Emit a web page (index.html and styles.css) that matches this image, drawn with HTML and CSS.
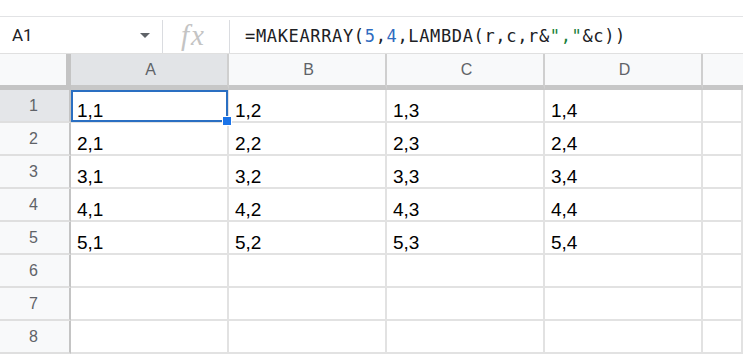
FILE: index.html
```html
<!DOCTYPE html>
<html>
<head>
<meta charset="utf-8">
<link rel="stylesheet" href="styles.css">
</head>
<body>
<div class="top"></div>
<div class="fbar">
  <div class="namebox"><span class="ref">A1</span><span class="caret"></span></div>
  <div class="sep"></div>
  <div class="fx">fx</div>
  <div class="sep"></div>
  <div class="formula">=MAKEARRAY(<span class="num">5</span>,<span class="num">4</span>,LAMBDA(r,c,r&amp;<span class="str">","</span>&amp;c))</div>
</div>
<div class="grid">
  <div class="corner"></div>
  <div class="ch sel">A</div>
  <div class="ch">B</div>
  <div class="ch">C</div>
  <div class="ch">D</div>
  <div class="ch last"></div>

  <div class="rh sel">1</div>
  <div class="cell active">1,1<span class="handle"></span></div>
  <div class="cell">1,2</div><div class="cell">1,3</div><div class="cell">1,4</div><div class="cell"></div>

  <div class="rh">2</div>
  <div class="cell">2,1</div><div class="cell">2,2</div><div class="cell">2,3</div><div class="cell">2,4</div><div class="cell"></div>

  <div class="rh">3</div>
  <div class="cell">3,1</div><div class="cell">3,2</div><div class="cell">3,3</div><div class="cell">3,4</div><div class="cell"></div>

  <div class="rh">4</div>
  <div class="cell">4,1</div><div class="cell">4,2</div><div class="cell">4,3</div><div class="cell">4,4</div><div class="cell"></div>

  <div class="rh">5</div>
  <div class="cell">5,1</div><div class="cell">5,2</div><div class="cell">5,3</div><div class="cell">5,4</div><div class="cell"></div>

  <div class="rh">6</div>
  <div class="cell"></div><div class="cell"></div><div class="cell"></div><div class="cell"></div><div class="cell"></div>

  <div class="rh">7</div>
  <div class="cell"></div><div class="cell"></div><div class="cell"></div><div class="cell"></div><div class="cell"></div>

  <div class="rh">8</div>
  <div class="cell"></div><div class="cell"></div><div class="cell"></div><div class="cell"></div><div class="cell"></div>
</div>
</body>
</html>
```
FILE: styles.css
```css
* { box-sizing: border-box; }
html, body {
  margin: 0;
  padding: 0;
  background: #ffffff;
  overflow: hidden;
  width: 743px;
  height: 355px;
}
.top {
  height: 17px;
  border-bottom: 1px solid #e2e3e5;
}
.fbar {
  display: flex;
  height: 37px;
  border-bottom: 1px solid #e0e0e0;
  align-items: center;
}
.namebox {
  width: 162px;
  display: flex;
  align-items: center;
  justify-content: space-between;
  padding: 0 12px 0 12px;
}
.ref {
  font-family: Roboto, "Liberation Sans", sans-serif;
  font-size: 17px;
  color: #202124;
}
.caret {
  width: 0;
  height: 0;
  border-left: 5px solid transparent;
  border-right: 5px solid transparent;
  border-top: 5px solid #5f6368;
  margin-top: 1px;
}
.sep {
  width: 1px;
  align-self: stretch;
  margin-top: 3px;
  background: #dadce0;
}
.fx {
  width: 66px;
  padding-left: 18px;
  font-family: "Liberation Serif", serif;
  font-style: italic;
  font-size: 29px;
  letter-spacing: 2px;
  color: #c4c4c4;
  line-height: 30px;
}
.formula {
  padding-left: 15px;
  padding-top: 2px;
  font-family: "DejaVu Sans Mono", monospace;
  font-size: 17px;
  letter-spacing: 0.65px;
  color: #202124;
  white-space: nowrap;
}
.num { color: #2f6bbf; }
.str { color: #188038; }

.grid {
  display: grid;
  grid-template-columns: 71px 158px 158px 158px 158px 40px;
  grid-template-rows: 36px repeat(8, 33px);
}
.corner {
  background: #f8f9fa;
  border-right: 5px solid #c4c4c4;
  border-bottom: 5px solid #c4c4c4;
}
.ch {
  background: #f8f9fa;
  border-right: 2px solid #cfcfcf;
  border-bottom: 5px solid #c7c7c7;
  display: flex;
  align-items: center;
  justify-content: center;
  font-family: "Liberation Sans", Arial, sans-serif;
  font-size: 16px;
  color: #5f6368;
  padding-left: 3px;
}
.ch.sel { background: #e2e4e7; }
.ch.last { border-right: none; }
.rh {
  background: #f8f9fa;
  border-right: 2px solid #c4c4c4;
  border-bottom: 2px solid #dfdfdf;
  display: flex;
  align-items: center;
  justify-content: center;
  font-family: "Liberation Sans", Arial, sans-serif;
  font-size: 16px;
  color: #5f6368;
  padding-right: 2px;
  padding-top: 1px;
}
.rh.sel { background: #e4e6e9; }
.cell {
  border-right: 2px solid #e2e2e2;
  border-bottom: 2px solid #e2e2e2;
  font-family: "Liberation Sans", Arial, sans-serif;
  font-size: 19px;
  line-height: 21px;
  padding: 10px 0 0 6px;
  color: #000000;
  white-space: nowrap;
}
.active {
  position: relative;
}
.active::after {
  content: "";
  position: absolute;
  left: 0;
  top: 0;
  right: -1px;
  bottom: -1px;
  border: 2px solid #2a6fc2;
}
.handle {
  position: absolute;
  right: -5px;
  bottom: -5px;
  width: 10px;
  height: 10px;
  background: #1a73e8;
  border: 1px solid #ffffff;
  z-index: 2;
}
```
